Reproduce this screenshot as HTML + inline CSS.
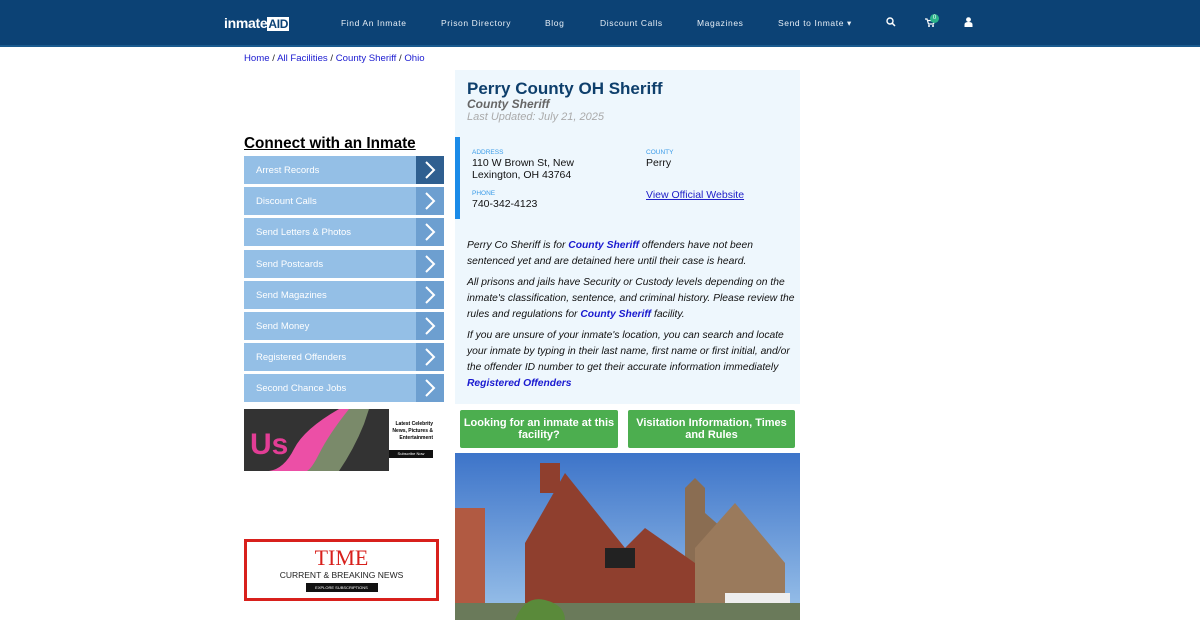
<!DOCTYPE html>
<html><head><meta charset="utf-8"><style>
*{margin:0;padding:0;box-sizing:border-box}
body{width:1200px;height:620px;overflow:hidden;background:#fff;font-family:"Liberation Sans",Arial,sans-serif;position:relative}
.nav{position:absolute;left:0;top:0;width:1200px;height:47px;background:#0c4275;border-bottom:2px solid #1a5a8e}
.nav a{position:absolute;top:18px;color:#e6eef6;font-size:8.5px;letter-spacing:.6px;text-decoration:none}
.logo{position:absolute;left:224px;top:15px;color:#fff;font-size:14px;font-weight:bold;letter-spacing:-.3px}
.bc{position:absolute;left:244px;top:53px;font-size:9.6px;color:#222}
.bc a{color:#1a1ad0;text-decoration:none}
.h2{position:absolute;left:244px;top:135px;font-size:15.3px;font-weight:bold;text-decoration:underline;color:#000}
.btn{position:absolute;left:244px;width:200px;height:28px;background:#94bfe6;color:#fff;font-size:9.5px;line-height:29px;padding-left:12px}
.btn .ar{position:absolute;right:0;top:0;width:28px;height:28px;background:#6d9fd0}
.btn .ar svg{position:absolute;left:7px;top:5px}
.info{position:absolute;left:455px;top:70px;width:345px;height:334px;background:#eef7fd}
.info h1{position:absolute;left:12px;top:9px;font-size:17px;color:#0e3f6c}
.sub{position:absolute;left:12px;top:27px;font-size:12px;font-style:italic;font-weight:bold;color:#666}
.upd{position:absolute;left:12px;top:40px;font-size:11px;font-style:italic;color:#aaa}
.bar{position:absolute;left:0;top:67px;width:5px;height:82px;background:#1b8be8}
.lbl{position:absolute;font-size:6.5px;color:#3a9be8}
.val{position:absolute;font-size:10.5px;color:#111;line-height:12px}
.txt{position:absolute;left:12px;font-size:10.3px;font-style:italic;color:#111;line-height:16px;width:328px}
.txt b{color:#1a1ad0}
.gb{position:absolute;top:410px;height:38px;background:#4cae4f;color:#fff;font-size:11px;font-weight:bold;text-align:center;border-radius:2px;padding-top:7px;line-height:12px}
</style></head><body>
<div class="nav">
<div class="logo">inmate<span style="background:#fff;color:#0c4275;padding:0 1px;font-size:12px">AID</span></div>
<a style="left:341px">Find An Inmate</a>
<a style="left:441px">Prison Directory</a>
<a style="left:545px">Blog</a>
<a style="left:600px">Discount Calls</a>
<a style="left:697px">Magazines</a>
<a style="left:778px">Send to Inmate ▾</a>
<svg style="position:absolute;left:886px;top:17px" width="10" height="10" viewBox="0 0 10 10"><circle cx="4" cy="4" r="3" fill="none" stroke="#fff" stroke-width="1.4"/><path d="M6.2 6.2L9 9" stroke="#fff" stroke-width="1.5"/></svg>
<svg style="position:absolute;left:925px;top:18px" width="10" height="9" viewBox="0 0 10 9"><path d="M0 1h2l1.5 5h5l1-3.5H3" fill="none" stroke="#fff" stroke-width="1.2"/><circle cx="4" cy="8" r="1" fill="#fff"/><circle cx="8" cy="8" r="1" fill="#fff"/></svg>
<div style="position:absolute;left:930px;top:14px;width:9px;height:9px;border-radius:50%;background:#2bb38a;color:#fff;font-size:6px;text-align:center;line-height:9px">0</div>
<svg style="position:absolute;left:964px;top:17px" width="9" height="10" viewBox="0 0 9 10"><circle cx="4.5" cy="2.6" r="2.4" fill="#fff"/><path d="M0.5 10v-2.5q0-2.5 4-2.5t4 2.5V10z" fill="#fff"/></svg>
</div>
<div class="bc"><a>Home</a> / <a>All Facilities</a> / <a>County Sheriff</a> / <a>Ohio</a></div>
<div class="h2">Connect with an Inmate</div>
<div class="btn" style="top:156px">Arrest Records<div class="ar" style="background:#2f5f90"><svg width="14" height="18" viewBox="0 0 14 18"><path d="M3 1l8 8-8 8" fill="none" stroke="#fff" stroke-width="2"/></svg></div></div>
<div class="btn" style="top:187px">Discount Calls<div class="ar"><svg width="14" height="18" viewBox="0 0 14 18"><path d="M3 1l8 8-8 8" fill="none" stroke="#fff" stroke-width="2"/></svg></div></div>
<div class="btn" style="top:218px">Send Letters &amp; Photos<div class="ar"><svg width="14" height="18" viewBox="0 0 14 18"><path d="M3 1l8 8-8 8" fill="none" stroke="#fff" stroke-width="2"/></svg></div></div>
<div class="btn" style="top:250px">Send Postcards<div class="ar"><svg width="14" height="18" viewBox="0 0 14 18"><path d="M3 1l8 8-8 8" fill="none" stroke="#fff" stroke-width="2"/></svg></div></div>
<div class="btn" style="top:281px">Send Magazines<div class="ar"><svg width="14" height="18" viewBox="0 0 14 18"><path d="M3 1l8 8-8 8" fill="none" stroke="#fff" stroke-width="2"/></svg></div></div>
<div class="btn" style="top:312px">Send Money<div class="ar"><svg width="14" height="18" viewBox="0 0 14 18"><path d="M3 1l8 8-8 8" fill="none" stroke="#fff" stroke-width="2"/></svg></div></div>
<div class="btn" style="top:343px">Registered Offenders<div class="ar"><svg width="14" height="18" viewBox="0 0 14 18"><path d="M3 1l8 8-8 8" fill="none" stroke="#fff" stroke-width="2"/></svg></div></div>
<div class="btn" style="top:374px">Second Chance Jobs<div class="ar"><svg width="14" height="18" viewBox="0 0 14 18"><path d="M3 1l8 8-8 8" fill="none" stroke="#fff" stroke-width="2"/></svg></div></div>
<div style="position:absolute;left:244px;top:409px;width:145px;height:62px;background:#333"></div>
<svg style="position:absolute;left:244px;top:409px" width="145" height="62"><path d="M95 0Q60 20 50 40T25 62H70Q90 40 100 20T125 0Z" fill="#ec4fa6"/><path d="M105 0Q85 25 75 45T60 62H95Q110 40 120 15L125 0Z" fill="#7a8a6a"/><text x="6" y="45" font-family="Liberation Sans" font-weight="bold" font-size="30" fill="#e23d95">Us</text></svg>
<div style="position:absolute;left:390px;top:421px;width:43px;font-size:5px;font-weight:bold;text-align:right;line-height:7px">Latest Celebrity News, Pictures &amp; Entertainment</div>
<div style="position:absolute;left:389px;top:450px;width:44px;height:8px;background:#111;color:#fff;font-size:4px;text-align:center;line-height:8px">Subscribe Now</div>
<div style="position:absolute;left:244px;top:539px;width:195px;height:62px;border:3px solid #d8201c;text-align:center">
<div style="font-family:'Liberation Serif',serif;color:#d8201c;font-size:22px;line-height:22px;margin-top:5px">TIME</div>
<div style="font-size:8.5px;color:#222;margin-top:1px">CURRENT &amp; BREAKING NEWS</div>
<div style="width:72px;height:9px;background:#111;color:#fff;font-size:4px;line-height:9px;margin:3px auto 0">EXPLORE SUBSCRIPTIONS</div></div>
<div class="info">
<h1>Perry County OH Sheriff</h1>
<div class="sub">County Sheriff</div>
<div class="upd" style="top:41px">Last Updated: July 21, 2025</div>
<div class="bar"></div>
<div class="lbl" style="left:17px;top:79px">ADDRESS</div>
<div class="val" style="left:17px;top:87px">110 W Brown St, New<br>Lexington, OH 43764</div>
<div class="lbl" style="left:17px;top:120px">PHONE</div>
<div class="val" style="left:17px;top:128px">740-342-4123</div>
<div class="lbl" style="left:191px;top:79px">COUNTY</div>
<div class="val" style="left:191px;top:87px">Perry</div>
<div class="val" style="left:191px;top:119px;color:#2020c8;text-decoration:underline">View Official Website</div>
<div class="txt" style="top:168px">Perry Co Sheriff is for <b>County Sheriff</b> offenders have not been sentenced yet and are detained here until their case is heard.</div>
<div class="txt" style="top:205px">All prisons and jails have Security or Custody levels depending on the inmate's classification, sentence, and criminal history. Please review the rules and regulations for <b>County Sheriff</b> facility.</div>
<div class="txt" style="top:258px">If you are unsure of your inmate's location, you can search and locate your inmate by typing in their last name, first name or first initial, and/or the offender ID number to get their accurate information immediately <b>Registered Offenders</b></div>
</div>
<div class="gb" style="left:460px;width:158px">Looking for an inmate at this facility?</div>
<div class="gb" style="left:628px;width:167px">Visitation Information, Times and Rules</div>
<svg style="position:absolute;left:455px;top:453px" width="345" height="167" viewBox="0 0 345 167">
<defs><linearGradient id="s" x1="0" y1="0" x2="0" y2="1"><stop offset="0" stop-color="#3d74c9"/><stop offset="1" stop-color="#9cc3ea"/></linearGradient></defs>
<rect width="345" height="167" fill="url(#s)"/>
<path d="M230 35l10-10 10 10v25l40 35v72H230z" fill="#8a6d52"/>
<path d="M240 95l40-45 50 60v57H240z" fill="#9a7a5c"/>
<path d="M0 55h30v112H0z" fill="#b15a42"/>
<path d="M70 90l40-70 60 75 20-20 50 35v57H70z" fill="#8f3f2e"/>
<path d="M85 10h20v30H85z" fill="#8f3f2e"/>
<path d="M150 95h30v20h-30z" fill="#222"/>
<rect x="270" y="140" width="65" height="20" fill="#eee"/>
<rect x="0" y="150" width="345" height="17" fill="#6a7a5a"/>
<path d="M60 167q10-25 30-20t20 20z" fill="#5a8a3a"/>
</svg>
</body></html>
